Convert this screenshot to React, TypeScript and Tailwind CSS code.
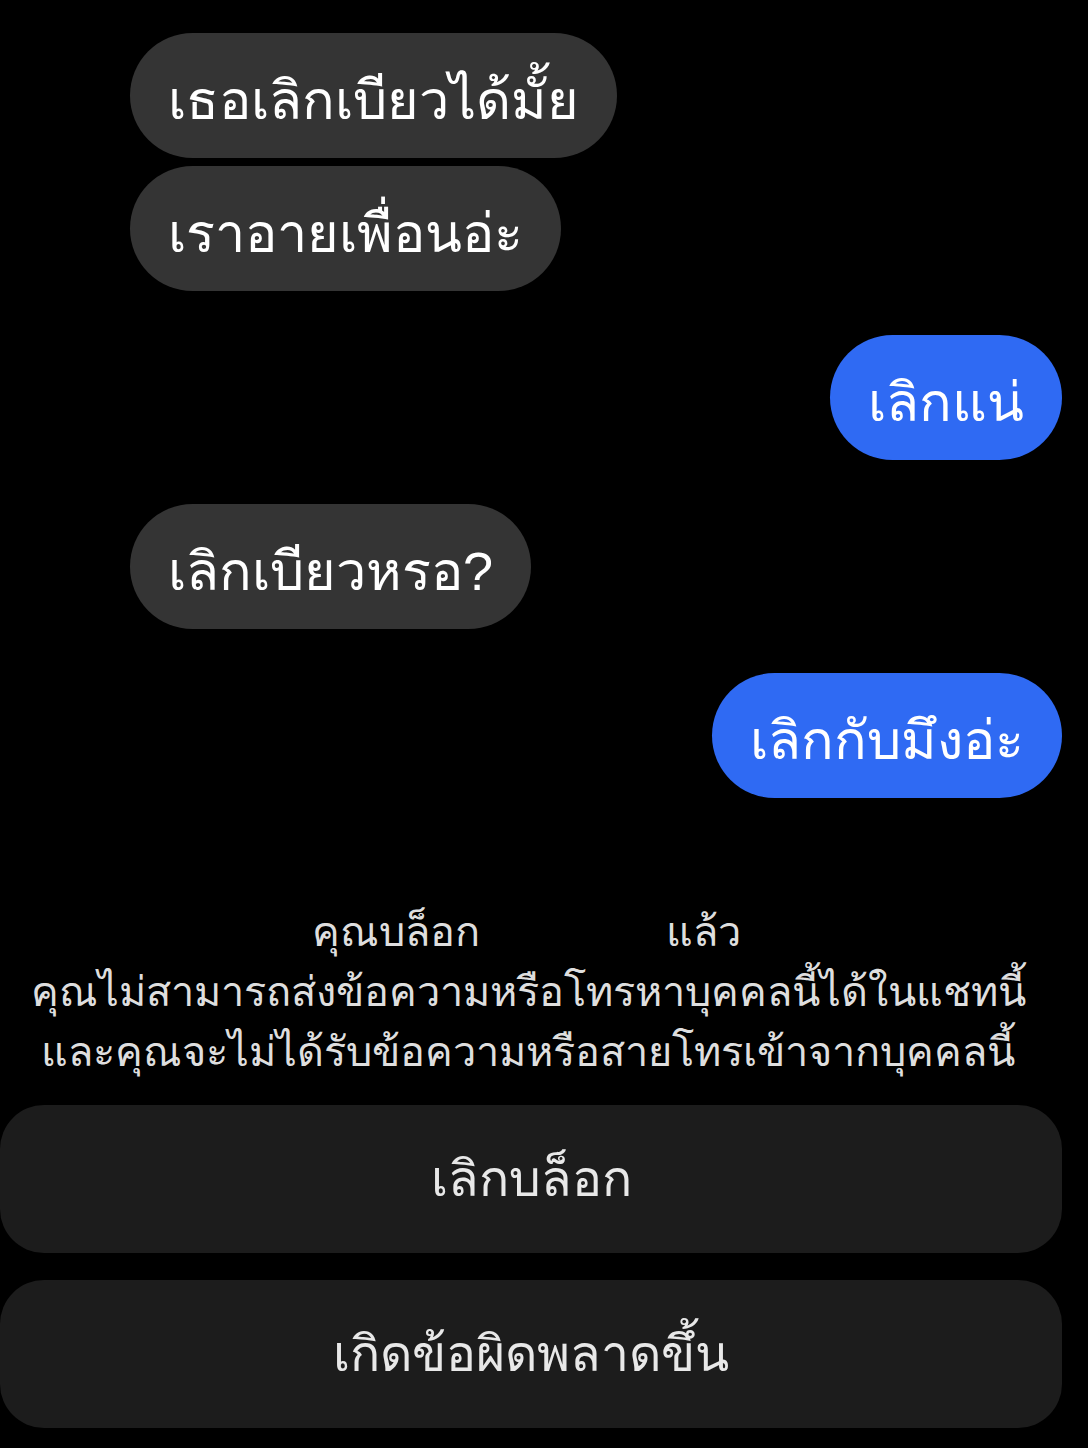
function Bubble({ text, mine }: { text: string; mine?: boolean }) {
  return (
    <div
      className={`flex h-[125px] items-center rounded-full px-[38px] text-[54px] text-white ${
        mine ? "bg-[#2f6af3]" : "bg-[#343434]"
      }`}
    >
      <span className="pt-2 leading-none whitespace-nowrap">{text}</span>
    </div>
  );
}

export default function App() {
  return (
    <div className="flex h-[1448px] w-[1088px] flex-col bg-black font-['Liberation_Sans',sans-serif]">
      <div className="flex flex-col pt-[33px] pl-[130px] pr-[26px]">
        <div className="self-start">
          <Bubble text="เธอเลิกเบียวได้มั้ย" />
        </div>
        <div className="mt-2 self-start">
          <Bubble text="เราอายเพื่อนอ่ะ" />
        </div>
        <div className="mt-11 self-end">
          <Bubble text="เลิกแน่" mine />
        </div>
        <div className="mt-11 self-start">
          <Bubble text="เลิกเบียวหรอ?" />
        </div>
        <div className="mt-11 self-end">
          <Bubble text="เลิกกับมึงอ่ะ" mine />
        </div>
      </div>

      <div className="mt-[104px] flex flex-col items-center text-[41.5px] leading-[60px] text-[#dedede]">
        <div className="flex items-center pr-[36px]">
          <span>คุณบล็อก</span>
          <span className="w-[186px]" />
          <span>แล้ว</span>
        </div>
        <div className="pr-[32px]">คุณไม่สามารถส่งข้อความหรือโทรหาบุคคลนี้ได้ในแชทนี้</div>
        <div className="pr-[32px]">และคุณจะไม่ได้รับข้อความหรือสายโทรเข้าจากบุคคลนี้</div>
      </div>

      <div className="mt-[23px] flex flex-col gap-[27px] pr-[26px]">
        <button className="flex h-[148px] items-center justify-center rounded-[44px] bg-[#1c1c1c] text-[50px] text-[#e8e8e8]">
          เลิกบล็อก
        </button>
        <button className="flex h-[148px] items-center justify-center rounded-[44px] bg-[#1c1c1c] text-[50px] text-[#e8e8e8]">
          เกิดข้อผิดพลาดขึ้น
        </button>
      </div>
    </div>
  );
}
